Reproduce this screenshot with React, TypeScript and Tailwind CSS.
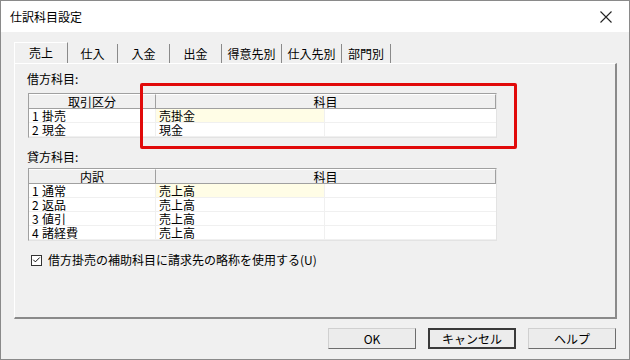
import { Check } from "lucide-react";

const font = { fontFamily: '"Noto Sans CJK JP", "Noto Sans", sans-serif' };

const tabs = [
  { label: "売上", w: "w-[54px]" },
  { label: "仕入", w: "w-[50px]" },
  { label: "入金", w: "w-[52px]" },
  { label: "出金", w: "w-[52px]" },
  { label: "得意先別", w: "w-[60px]" },
  { label: "仕入先別", w: "w-[60px]" },
  { label: "部門別", w: "w-[49px]" },
];

interface Row {
  no: string;
  name: string;
  account: string;
}

const debitRows: Row[] = [
  { no: "1", name: "掛売", account: "売掛金" },
  { no: "2", name: "現金", account: "現金" },
];

const creditRows: Row[] = [
  { no: "1", name: "通常", account: "売上高" },
  { no: "2", name: "返品", account: "売上高" },
  { no: "3", name: "値引", account: "売上高" },
  { no: "4", name: "諸経費", account: "売上高" },
];

function Grid({ head, rows }: { head: string; rows: Row[] }) {
  return (
    <div className="w-[469px] border-t border-l border-[#a0a0a0] border-r border-b border-r-[#e3e3e3] border-b-[#e3e3e3] bg-white">
      <div className="flex h-[15px] bg-[#f0f0f0] text-[12px] leading-[13px]">
        <div className="w-[127px] border-r border-b border-[#a0a0a0] border-t border-t-white text-center">{head}</div>
        <div className="flex-1 border-r border-b border-[#a0a0a0] border-t border-t-white text-center">科目</div>
      </div>
      {rows.map((r, i) => (
        <div key={r.no} className="flex h-[14px] text-[12px] leading-[13px] border-b border-[#f0f0f0]">
          <div className="w-[127px] flex pl-[3px] border-r border-[#f0f0f0]">
            <span className="w-[10px]">{r.no}</span>
            <span>{r.name}</span>
          </div>
          <div className={`w-[169px] pl-[3px] border-r border-[#f0f0f0] ${i === 0 ? "bg-[#fffde6]" : ""}`}>{r.account}</div>
          <div className="flex-1" />
        </div>
      ))}
    </div>
  );
}

export default function App() {
  return (
    <div className="relative w-[630px] h-[360px] flex flex-col bg-[#f0f0f0] border border-[#8a8a8a] text-black" style={font}>
      {/* Title bar */}
      <div className="h-[31px] bg-white flex items-center justify-between pl-[9px] pr-[17px]">
        <span className="text-[12px]">仕訳科目設定</span>
        <svg width="12" height="12" viewBox="0 0 12 12" className="text-[#222]">
          <path d="M0.5 0.5 L11.5 11.5 M11.5 0.5 L0.5 11.5" stroke="currentColor" strokeWidth="1.1" />
        </svg>
      </div>

      <div className="flex-1 flex flex-col pt-[10px] pl-[13px]">
        {/* Tabs */}
        <div className="flex items-end h-[21px]">
          {tabs.map((t, i) => (
            <div
              key={t.label}
              className={`${t.w} flex items-center justify-center text-[12px] ${
                i === 0
                  ? "h-[21px] border-l border-t border-white border-r border-r-[#8a8a8a]"
                  : "h-[19px] border-r border-[#8a8a8a]"
              }`}
            >
              {t.label}
            </div>
          ))}
        </div>

        {/* Panel */}
        <div className="w-[603px] h-[256px] border-t border-l border-white border-r-2 border-b-2 border-r-[#8a8a8a] border-b-[#8a8a8a] flex flex-col pl-[12px]">
          <div className="mt-[8px] text-[12px] leading-[14px]">借方科目:</div>
          <div className="mt-[7px] ml-[1px]">
            <Grid head="取引区分" rows={debitRows} />
          </div>
          <div className="mt-[12px] text-[12px] leading-[14px]">貸方科目:</div>
          <div className="mt-[4px] ml-[1px]">
            <Grid head="内訳" rows={creditRows} />
          </div>
          <div className="mt-[12px] ml-[4px] flex items-center gap-[6px] text-[12px] leading-[14px]">
            <div className="w-[11px] h-[11px] border border-[#333] bg-white flex items-center justify-center">
              <Check size={10} strokeWidth={2.5} />
            </div>
            <span>借方掛売の補助科目に請求先の略称を使用する(U)</span>
          </div>
        </div>

        {/* Buttons */}
        <div className="mt-[9px] flex justify-end gap-[12px] pr-[13px]">
          <button className="w-[88px] h-[21px] bg-[#ececec] border border-[#d0d0d0] border-r-[#6d6d6d] border-b-[#6d6d6d] text-[12px] leading-none">OK</button>
          <button className="w-[88px] h-[21px] bg-[#ececec] border-2 border-[#3a3a3a] text-[12px] leading-none">キャンセル</button>
          <button className="w-[88px] h-[21px] bg-[#ececec] border border-[#d0d0d0] border-r-[#6d6d6d] border-b-[#6d6d6d] text-[12px] leading-none">ヘルプ</button>
        </div>
      </div>

      {/* Red annotation box */}
      <div className="absolute left-[139px] top-[82px] w-[377px] h-[66px] border-[3px] border-[#e10a0a] rounded-[2px]" />
    </div>
  );
}
